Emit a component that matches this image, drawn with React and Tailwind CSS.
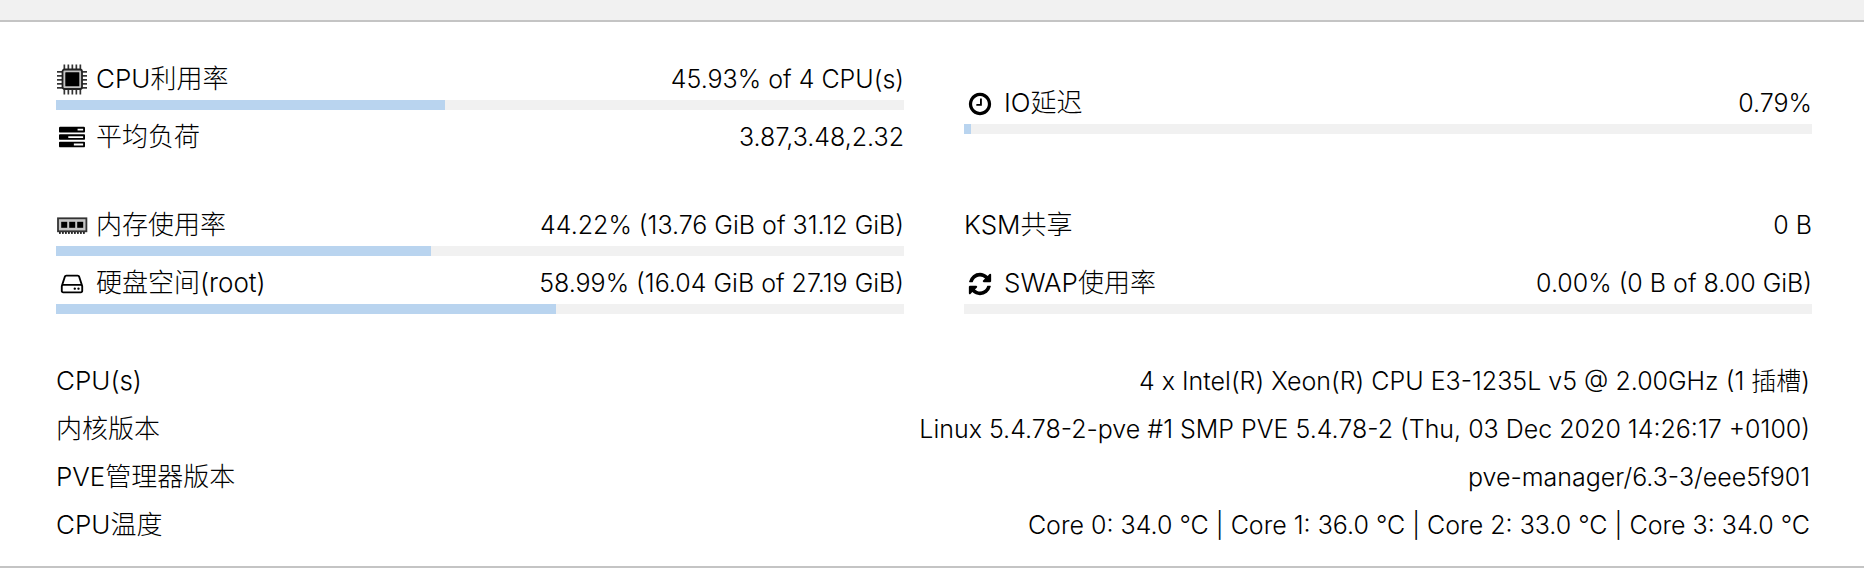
import React from 'react';

const CpuIcon = () => (
    <svg viewBox="0 0 32 32" className="h-8 w-8" aria-hidden="true">
        {[7.5, 11.5, 15.5, 19.5, 23.5].map((p) => (
            <g key={p} fill="#333">
                <rect x={p} y="0.5" width="1.7" height="30" />
                <rect x="1" y={p - 0.5} width="30" height="1.7" />
            </g>
        ))}
        <rect x="6.5" y="5.5" width="19.5" height="19.5" rx="2" fill="#c4c4c4" stroke="#222" strokeWidth="1.8" />
        <rect x="9.3" y="8.3" width="14" height="14" rx="0.5" fill="#000" />
    </svg>
);

const RamIcon = () => (
    <svg viewBox="0 0 32 32" className="h-8 w-8" aria-hidden="true">
        {[3, 6, 9, 12, 15, 18, 21, 24, 27].map((x) => (
            <rect key={x} x={x} y="21.5" width="1.8" height="2.4" fill="#222" />
        ))}
        <rect x="2" y="8.3" width="28.4" height="13" fill="#c4c4c4" stroke="#333" strokeWidth="1.8" />
        <rect x="5.2" y="11.8" width="6" height="6" fill="#000" />
        <rect x="13.2" y="11.8" width="6" height="6" fill="#000" />
        <rect x="21.2" y="11.8" width="6" height="6" fill="#000" />
    </svg>
);

const GlyphIcon = ({ d }) => (
    <svg viewBox="0 0 1792 1792" className="h-[26px] w-[26px]" fill="currentColor" aria-hidden="true">
        <path d={d} />
    </svg>
);

const tasksPath =
    'M1024 1408h640v-128h-640v128zm-384-512h1024v-128h-1024v128zm640-512h384v-128h-384v128zm512 832v256q0 26-19 45t-45 19h-1664q-26 0-45-19t-19-45v-256q0-26 19-45t45-19h1664q26 0 45 19t19 45zm0-512v256q0 26-19 45t-45 19h-1664q-26 0-45-19t-19-45v-256q0-26 19-45t45-19h1664q26 0 45 19t19 45zm0-512v256q0 26-19 45t-45 19h-1664q-26 0-45-19t-19-45v-256q0-26 19-45t45-19h1664q26 0 45 19t19 45z';
const hddPath =
    'M1168 1216q0 33-23.500 56.500t-56.500 23.500-56.500-23.500-23.500-56.500 23.500-56.500 56.500-23.500 56.500 23.500 23.500 56.500zm256 0q0 33-23.500 56.500t-56.500 23.500-56.500-23.500-23.500-56.500 23.500-56.500 56.500-23.500 56.500 23.500 23.500 56.500zm112 160v-320q0-13-9.500-22.500t-22.500-9.500h-1216q-13 0-22.500 9.500t-9.500 22.500v320q0 13 9.500 22.500t22.500 9.500h1216q13 0 22.500-9.500t9.500-22.500zm-1230-480h1180l-157-482q-4-13-16-21.500t-26-8.500h-782q-14 0-26 8.500t-16 21.500zm1358 160v320q0 66-47 113t-113 47h-1216q-66 0-113-47t-47-113v-320q0-25 16-75l197-606q17-53 63-86t101-33h782q55 0 101 33t63 86l197 606q16 50 16 75z';
const clockPath =
    'M1024 544v448q0 14-9 23t-23 9h-320q-14 0-23-9t-9-23v-64q0-14 9-23t23-9h224v-352q0-14 9-23t23-9h64q14 0 23 9t9 23zm416 352q0-148-73-273t-198-198-273-73-273 73-198 198-73 273 73 273 198 198 273 73 273-73 198-198 73-273zm224 0q0 209-103 385.500t-279.500 279.500-385.500 103-385.500-103-279.500-279.500-103-385.500 103-385.500 279.500-279.500 385.500-103 385.500 103 279.500 279.500 103 385.500z';
const refreshPath =
    'M1639 1056q0 5-1 7-64 268-268 434.500t-478 166.500q-146 0-282.500-55t-243.500-157l-129 129q-19 19-45 19t-45-19-19-45v-448q0-26 19-45t45-19h448q26 0 45 19t19 45-19 45l-137 137q71 66 161 102t187 36q134 0 250-65t186-179q11-17 53-117 8-23 30-23h192q13 0 22.500 9.500t9.500 22.500zm25-800v448q0 26-19 45t-45 19h-448q-26 0-45-19t-19-45 19-45l138-138q-148-137-349-137-134 0-250 65t-186 179q-11 17-53 117-8 23-30 23h-199q-13 0-22.500-9.500t-9.500-22.500v-7q65-268 270-434.500t480-166.500q146 0 284 55.500t245 156.500l130-129q19-19 45-19t45 19 19 45z';

const info = [
    { label: 'CPU(s)', value: '4 x Intel(R) Xeon(R) CPU E3-1235L v5 @ 2.00GHz (1 插槽)' },
    { label: '内核版本', value: 'Linux 5.4.78-2-pve #1 SMP PVE 5.4.78-2 (Thu, 03 Dec 2020 14:26:17 +0100)' },
    { label: 'PVE管理器版本', value: 'pve-manager/6.3-3/eee5f901' },
    { label: 'CPU温度', value: 'Core 0: 34.0 °C | Core 1: 36.0 °C | Core 2: 33.0 °C | Core 3: 34.0 °C' },
];

const Meter = ({ icon, label, value, percent }) => (
    <div>
        <div className="flex h-10 justify-between">
            <div className="flex gap-2">
                {icon && <span className="flex w-8 items-center justify-center">{icon}</span>}
                <span>{label}</span>
            </div>
            <span className="text-[25px] leading-[38px]">{value}</span>
        </div>
        {percent !== undefined && (
            <div
                role="progressbar"
                aria-label={label}
                aria-valuenow={percent}
                aria-valuemin={0}
                aria-valuemax={100}
                className="h-[10px] bg-[#f1f1f1]"
            >
                <div className="h-full bg-[#b9d4ef]" style={{ width: `${percent}%` }} />
            </div>
        )}
    </div>
);

const App = () => {
    return (
        <div className="bg-white font-['Inter','Noto_Sans_CJK_SC',sans-serif] text-[26px] leading-[38px] font-light text-black">
            <div className="h-[22px] border-b-2 border-[#c4c4c4] bg-[#f1f1f1]" />
            <main className="border-b-2 border-[#c4c4c4] pt-[38px] pr-[52px] pb-[22px] pl-14">
                <section className="grid grid-cols-2 items-center gap-x-[60px]">
                    <div className="flex flex-col gap-2">
                        <Meter icon={<CpuIcon />} label="CPU利用率" value="45.93% of 4 CPU(s)" percent={45.93} />
                        <Meter icon={<GlyphIcon d={tasksPath} />} label="平均负荷" value="3.87,3.48,2.32" />
                    </div>
                    <Meter icon={<GlyphIcon d={clockPath} />} label="IO延迟" value="0.79%" percent={0.79} />
                </section>
                <section className="mt-12 grid grid-cols-2 gap-x-[60px]">
                    <div className="flex flex-col gap-2">
                        <Meter icon={<RamIcon />} label="内存使用率" value="44.22% (13.76 GiB of 31.12 GiB)" percent={44.22} />
                        <Meter icon={<GlyphIcon d={hddPath} />} label="硬盘空间(root)" value="58.99% (16.04 GiB of 27.19 GiB)" percent={58.99} />
                    </div>
                    <div className="flex flex-col justify-between">
                        <Meter label="KSM共享" value="0 B" />
                        <Meter icon={<GlyphIcon d={refreshPath} />} label="SWAP使用率" value="0.00% (0 B of 8.00 GiB)" percent={0} />
                    </div>
                </section>
                <dl className="mt-12 flex flex-col gap-[10px] pr-0.5">
                    {info.map((row) => (
                        <div key={row.label} className="flex justify-between">
                            <dt>{row.label}</dt>
                            <dd className="text-[25px] leading-[38px]">{row.value}</dd>
                        </div>
                    ))}
                </dl>
            </main>
        </div>
    );
};

export default App;
